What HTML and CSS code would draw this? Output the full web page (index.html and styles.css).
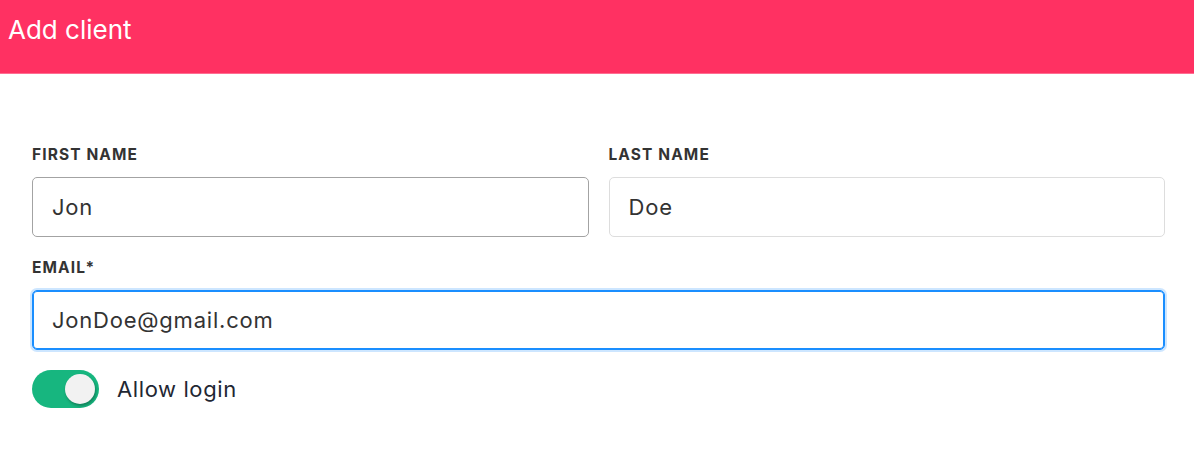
FILE: index.html
```html
<!DOCTYPE html>
<html lang="en">
<head>
<meta charset="utf-8">
<title>Add client</title>
<link rel="stylesheet" href="styles.css">
</head>
<body>
<header class="topbar">
  <h1 class="title">Add client</h1>
</header>
<form class="form">
  <div class="row two">
    <div class="field">
      <label class="label">First name</label>
      <div class="input hovered">Jon</div>
    </div>
    <div class="field">
      <label class="label">Last name</label>
      <div class="input">Doe</div>
    </div>
  </div>
  <div class="row">
    <div class="field">
      <label class="label">Email*</label>
      <div class="input focused">JonDoe@gmail.com</div>
    </div>
  </div>
  <div class="toggle-row">
    <span class="switch"><span class="knob"></span></span>
    <span class="toggle-label">Allow login</span>
  </div>
</form>
</body>
</html>
```
FILE: styles.css
```css
html, body {
  margin: 0;
  padding: 0;
  background: #ffffff;
  font-family: Inter, "Liberation Sans", sans-serif;
}
.topbar {
  background: #ff3162;
  border-bottom: 1px solid #ff6d92;
  padding: 12px 0 0 8px;
  box-sizing: border-box;
  height: 74px;
}
.title {
  margin: 0;
  font-size: 26px;
  font-weight: 400;
  line-height: 36px;
  color: #ffffff;
}
.form {
  padding: 71px 29px 0 32px;
}
.row {
  display: flex;
  gap: 20px;
}
.row + .row {
  margin-top: 21px;
}
.field {
  flex: 1;
  display: flex;
  flex-direction: column;
}
.label {
  font-size: 15.5px;
  font-weight: 700;
  line-height: 20px;
  text-transform: uppercase;
  color: #333333;
  letter-spacing: 1.1px;
  margin-bottom: 12px;
}
.input {
  height: 60px;
  box-sizing: border-box;
  border: 1px solid #dddddd;
  border-radius: 5px;
  padding: 0 19px;
  display: flex;
  align-items: center;
  font-size: 22px;
  letter-spacing: 0.78px;
  color: #333333;
}
.input.hovered {
  border-color: #a3a3a3;
}
.input.focused {
  border-color: #1a8eff;
  box-shadow: inset 0 0 0 1px #1a8eff, 0 0 0 2px rgba(26, 142, 255, 0.22);
}
.toggle-row {
  margin-top: 20px;
  display: flex;
  align-items: center;
  gap: 18px;
}
.switch {
  width: 67px;
  height: 38px;
  border-radius: 19px;
  background: #17b67f;
  display: flex;
  align-items: center;
  justify-content: flex-end;
  padding-right: 4px;
  box-sizing: border-box;
}
.knob {
  width: 30px;
  height: 30px;
  border-radius: 50%;
  background: #f2f2f2;
  box-shadow: 1px 2px 3px rgba(0, 0, 0, 0.3);
}
.toggle-label {
  font-size: 22px;
  letter-spacing: 0.6px;
  color: #1f2733;
}
```
